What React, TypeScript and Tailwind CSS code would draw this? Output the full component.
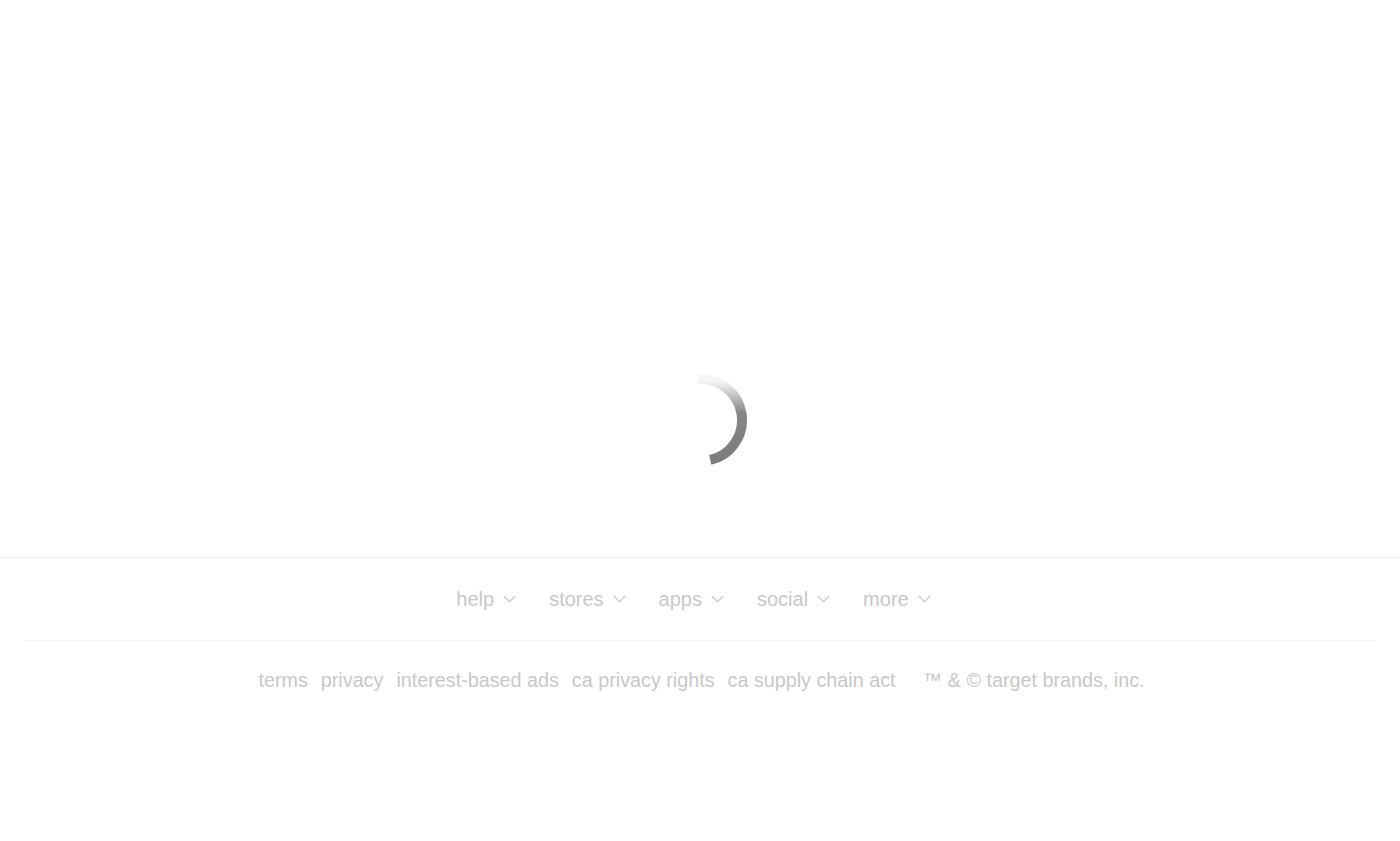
import React from "react";

function Chevron() {
  return (
    <svg width="13" height="8" viewBox="0 0 13 8" fill="none" className="shrink-0">
      <path d="M0.8 1 L6.5 6.6 L12.2 1" stroke="#c8c8c8" strokeWidth="1.2" fill="none" />
    </svg>
  );
}

function Spinner() {
  const cx = 48, cy = 48, r = 41;
  const a0 = (-95 * Math.PI) / 180;
  const a1 = (77 * Math.PI) / 180;
  const x0 = cx + r * Math.cos(a0), y0 = cy + r * Math.sin(a0);
  const x1 = cx + r * Math.cos(a1), y1 = cy + r * Math.sin(a1);
  return (
    <svg width="96" height="96" viewBox="0 0 96 96" className="ml-[2px]">
      <defs>
        <linearGradient id="sg" x1="0" y1="0" x2="0" y2="1">
          <stop offset="0.03" stopColor="#f6f6f6" />
          <stop offset="0.42" stopColor="#858585" />
          <stop offset="1" stopColor="#7c7c7c" />
        </linearGradient>
      </defs>
      <path
        d={`M ${x0} ${y0} A ${r} ${r} 0 0 1 ${x1} ${y1}`}
        stroke="url(#sg)"
        strokeWidth="10"
        fill="none"
      />
    </svg>
  );
}

export default function App() {
  const nav = ["help", "stores", "apps", "social", "more"];
  const legal = ["terms", "privacy", "interest-based ads", "ca privacy rights", "ca supply chain act"];
  return (
    <div
      className="w-[1400px] h-[841px] bg-white overflow-hidden text-[#c8c8c8]"
      style={{ fontFamily: '"Liberation Sans", Arial, sans-serif' }}
    >
      <div className="h-[557px] flex justify-center pt-[372px]">
        <Spinner />
      </div>
      <footer className="border-t border-[#f1f1f1]">
        <nav className="h-[82px] flex items-center justify-center gap-[33px] pr-[13px]">
          {nav.map((n) => (
            <div key={n} className="flex items-center gap-[9px] text-[20px] leading-[24px]">
              <span>{n}</span>
              <Chevron />
            </div>
          ))}
        </nav>
        <div className="mx-6 border-t border-[#f1f1f1]" />
        <div className="pt-[27px] pl-[3px] flex justify-center items-center text-[19.75px] leading-[24px]">
          <div className="flex gap-[13px]">
            {legal.map((l) => (
              <span key={l}>{l}</span>
            ))}
          </div>
          <span className="ml-[27px]">™ &amp; © target brands, inc.</span>
        </div>
      </footer>
    </div>
  );
}
